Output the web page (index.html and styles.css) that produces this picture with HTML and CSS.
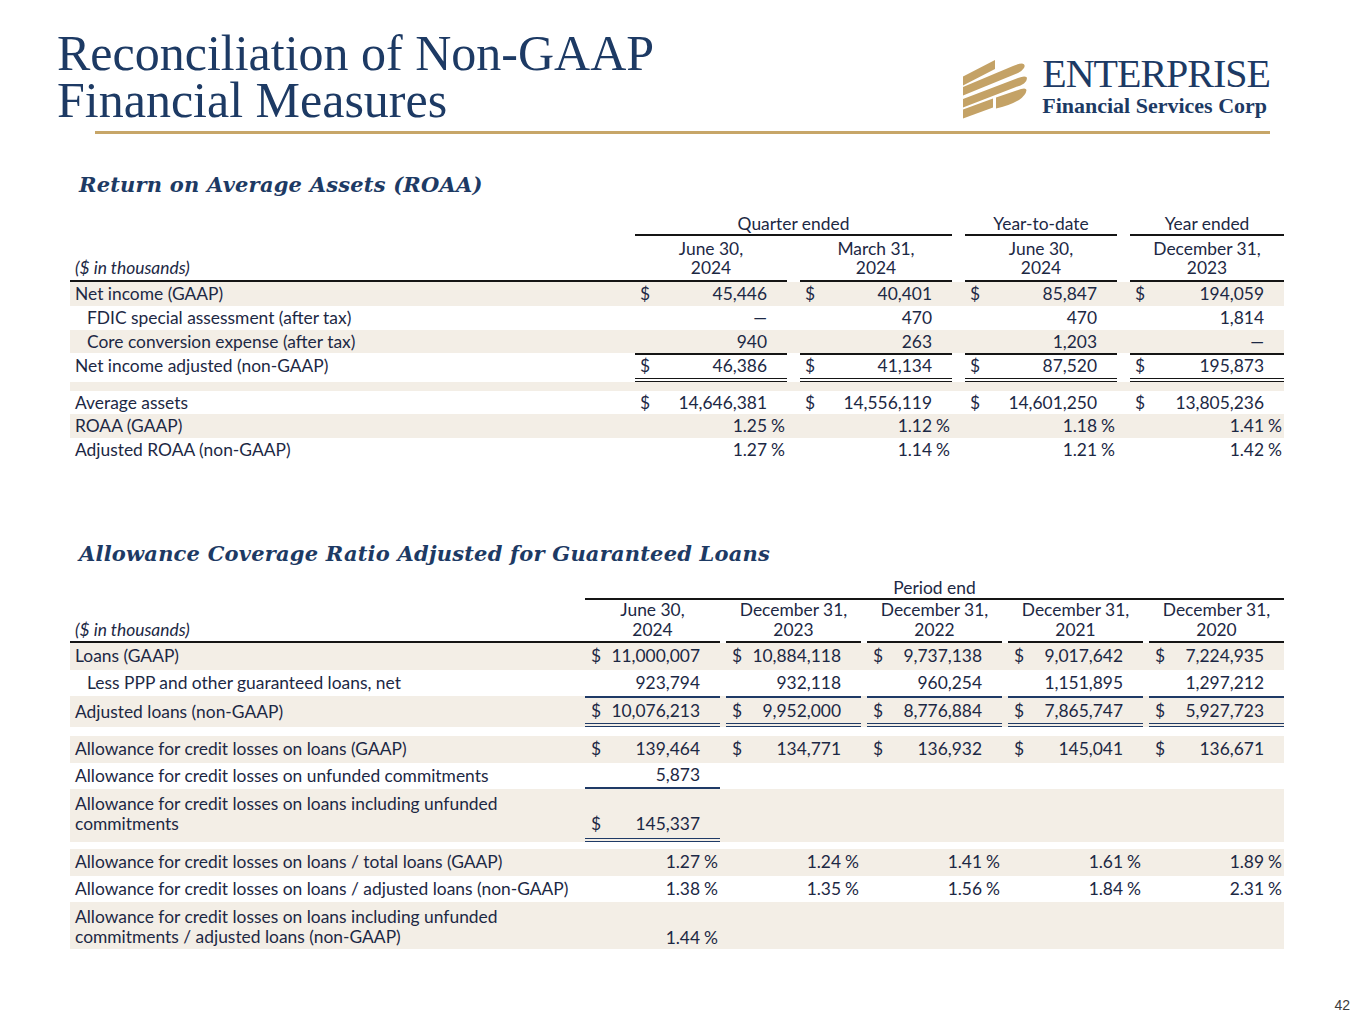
FILE: index.html
```html
<!DOCTYPE html>
<html lang="en">
<head>
<meta charset="utf-8">
<title>Reconciliation of Non-GAAP Financial Measures</title>
<link rel="stylesheet" href="styles.css">
</head>
<body>
<div class="slide">
  <header class="top">
    <h1 class="title">Reconciliation of Non-GAAP<br>Financial Measures</h1>
    <div class="logo">
      <svg class="mark" viewBox="0 0 74 64" aria-hidden="true">
        <g fill="#c4a266">
          <polygon points="2,18.5 34,2 34,11 2,27.5"/>
          <path d="M2,29 L52,8 Q58,5.5 61,5.5 Q65,6 63,10 Q61,13 57,15 L2,37.5 Z"/>
          <path d="M2,41 L57,20 Q63,17.5 65.5,19 Q67,22 63,25.5 Q60,27.5 55,29 L2,49.5 Z"/>
          <polygon points="2,51.5 32,40.5 32,49.5 2,60.5"/>
          <path d="M35,39.5 L60,31 Q65,29.5 65.5,32 Q65,37 58,42 Q48,48 35,50.5 Z"/>
        </g>
      </svg>
      <div class="logo-text">
        <div class="logo-name">ENTERPRISE</div>
        <div class="logo-sub">Financial Services Corp</div>
      </div>
    </div>
  </header>
  <div class="rule"></div>

  <section class="sec sec1">
    <h2 class="sec-title">Return on Average Assets (ROAA)</h2>
    <div class="t1">
      <div class="row grp">
        <div></div>
        <div class="gh span2">Quarter ended</div>
        <div class="gh">Year-to-date</div>
        <div class="gh">Year ended</div>
      </div>
      <div class="row hdr">
        <div class="units">($ in thousands)</div>
        <div class="dh">June 30,<br>2024</div>
        <div class="dh">March 31,<br>2024</div>
        <div class="dh">June 30,<br>2024</div>
        <div class="dh">December 31,<br>2023</div>
      </div>
      <div class="row r shade">
        <div class="lbl">Net income (GAAP)</div>
        <div class="v"><span class="cur">$</span><span class="num">45,446</span><span class="suf"></span></div>
        <div class="v"><span class="cur">$</span><span class="num">40,401</span><span class="suf"></span></div>
        <div class="v"><span class="cur">$</span><span class="num">85,847</span><span class="suf"></span></div>
        <div class="v"><span class="cur">$</span><span class="num">194,059</span><span class="suf"></span></div>
      </div>
      <div class="row r">
        <div class="lbl ind">FDIC special assessment (after tax)</div>
        <div class="v"><span class="cur"></span><span class="num">—</span><span class="suf"></span></div>
        <div class="v"><span class="cur"></span><span class="num">470</span><span class="suf"></span></div>
        <div class="v"><span class="cur"></span><span class="num">470</span><span class="suf"></span></div>
        <div class="v"><span class="cur"></span><span class="num">1,814</span><span class="suf"></span></div>
      </div>
      <div class="row r r23 shade">
        <div class="lbl ind">Core conversion expense (after tax)</div>
        <div class="v"><span class="cur"></span><span class="num">940</span><span class="suf"></span></div>
        <div class="v"><span class="cur"></span><span class="num">263</span><span class="suf"></span></div>
        <div class="v"><span class="cur"></span><span class="num">1,203</span><span class="suf"></span></div>
        <div class="v"><span class="cur"></span><span class="num">—</span><span class="suf"></span></div>
      </div>
      <div class="row r tot">
        <div class="lbl">Net income adjusted (non-GAAP)</div>
        <div class="v sum"><span class="cur">$</span><span class="num">46,386</span><span class="suf"></span></div>
        <div class="v sum"><span class="cur">$</span><span class="num">41,134</span><span class="suf"></span></div>
        <div class="v sum"><span class="cur">$</span><span class="num">87,520</span><span class="suf"></span></div>
        <div class="v sum"><span class="cur">$</span><span class="num">195,873</span><span class="suf"></span></div>
      </div>
      <div class="gap1 shade"></div>
      <div class="row r r23">
        <div class="lbl">Average assets</div>
        <div class="v"><span class="cur">$</span><span class="num">14,646,381</span><span class="suf"></span></div>
        <div class="v"><span class="cur">$</span><span class="num">14,556,119</span><span class="suf"></span></div>
        <div class="v"><span class="cur">$</span><span class="num">14,601,250</span><span class="suf"></span></div>
        <div class="v"><span class="cur">$</span><span class="num">13,805,236</span><span class="suf"></span></div>
      </div>
      <div class="row r shade">
        <div class="lbl">ROAA (GAAP)</div>
        <div class="v"><span class="cur"></span><span class="num">1.25</span><span class="suf">%</span></div>
        <div class="v"><span class="cur"></span><span class="num">1.12</span><span class="suf">%</span></div>
        <div class="v"><span class="cur"></span><span class="num">1.18</span><span class="suf">%</span></div>
        <div class="v"><span class="cur"></span><span class="num">1.41</span><span class="suf">%</span></div>
      </div>
      <div class="row r">
        <div class="lbl">Adjusted ROAA (non-GAAP)</div>
        <div class="v"><span class="cur"></span><span class="num">1.27</span><span class="suf">%</span></div>
        <div class="v"><span class="cur"></span><span class="num">1.14</span><span class="suf">%</span></div>
        <div class="v"><span class="cur"></span><span class="num">1.21</span><span class="suf">%</span></div>
        <div class="v"><span class="cur"></span><span class="num">1.42</span><span class="suf">%</span></div>
      </div>
    </div>
  </section>

  <section class="sec sec2">
    <h2 class="sec-title">Allowance Coverage Ratio Adjusted for Guaranteed Loans</h2>
    <div class="t2">
      <div class="row grp">
        <div></div>
        <div class="gh span5">Period end</div>
      </div>
      <div class="row hdr">
        <div class="units">($ in thousands)</div>
        <div class="dh">June 30,<br>2024</div>
        <div class="dh">December 31,<br>2023</div>
        <div class="dh">December 31,<br>2022</div>
        <div class="dh">December 31,<br>2021</div>
        <div class="dh">December 31,<br>2020</div>
      </div>
      <div class="row r shade">
        <div class="lbl">Loans (GAAP)</div>
        <div class="v"><span class="cur">$</span><span class="num">11,000,007</span><span class="suf"></span></div>
        <div class="v"><span class="cur">$</span><span class="num">10,884,118</span><span class="suf"></span></div>
        <div class="v"><span class="cur">$</span><span class="num">9,737,138</span><span class="suf"></span></div>
        <div class="v"><span class="cur">$</span><span class="num">9,017,642</span><span class="suf"></span></div>
        <div class="v"><span class="cur">$</span><span class="num">7,224,935</span><span class="suf"></span></div>
      </div>
      <div class="row r">
        <div class="lbl ind">Less PPP and other guaranteed loans, net</div>
        <div class="v"><span class="cur"></span><span class="num">923,794</span><span class="suf"></span></div>
        <div class="v"><span class="cur"></span><span class="num">932,118</span><span class="suf"></span></div>
        <div class="v"><span class="cur"></span><span class="num">960,254</span><span class="suf"></span></div>
        <div class="v"><span class="cur"></span><span class="num">1,151,895</span><span class="suf"></span></div>
        <div class="v"><span class="cur"></span><span class="num">1,297,212</span><span class="suf"></span></div>
      </div>
      <div class="row r tot shade">
        <div class="lbl">Adjusted loans (non-GAAP)</div>
        <div class="v sum"><span class="cur">$</span><span class="num">10,076,213</span><span class="suf"></span></div>
        <div class="v sum"><span class="cur">$</span><span class="num">9,952,000</span><span class="suf"></span></div>
        <div class="v sum"><span class="cur">$</span><span class="num">8,776,884</span><span class="suf"></span></div>
        <div class="v sum"><span class="cur">$</span><span class="num">7,865,747</span><span class="suf"></span></div>
        <div class="v sum"><span class="cur">$</span><span class="num">5,927,723</span><span class="suf"></span></div>
      </div>
      <div class="gap2"></div>
      <div class="row r shade">
        <div class="lbl">Allowance for credit losses on loans (GAAP)</div>
        <div class="v"><span class="cur">$</span><span class="num">139,464</span><span class="suf"></span></div>
        <div class="v"><span class="cur">$</span><span class="num">134,771</span><span class="suf"></span></div>
        <div class="v"><span class="cur">$</span><span class="num">136,932</span><span class="suf"></span></div>
        <div class="v"><span class="cur">$</span><span class="num">145,041</span><span class="suf"></span></div>
        <div class="v"><span class="cur">$</span><span class="num">136,671</span><span class="suf"></span></div>
      </div>
      <div class="row r">
        <div class="lbl">Allowance for credit losses on unfunded commitments</div>
        <div class="v under"><span class="cur"></span><span class="num">5,873</span><span class="suf"></span></div>
      </div>
      <div class="row r two shade">
        <div class="lbl">Allowance for credit losses on loans including unfunded<br>commitments</div>
        <div class="v end dbl"><span class="cur">$</span><span class="num">145,337</span><span class="suf"></span></div>
      </div>
      <div class="gap3"></div>
      <div class="row r shade">
        <div class="lbl">Allowance for credit losses on loans / total loans (GAAP)</div>
        <div class="v"><span class="cur"></span><span class="num">1.27</span><span class="suf">%</span></div>
        <div class="v"><span class="cur"></span><span class="num">1.24</span><span class="suf">%</span></div>
        <div class="v"><span class="cur"></span><span class="num">1.41</span><span class="suf">%</span></div>
        <div class="v"><span class="cur"></span><span class="num">1.61</span><span class="suf">%</span></div>
        <div class="v"><span class="cur"></span><span class="num">1.89</span><span class="suf">%</span></div>
      </div>
      <div class="row r">
        <div class="lbl">Allowance for credit losses on loans / adjusted loans (non-GAAP)</div>
        <div class="v"><span class="cur"></span><span class="num">1.38</span><span class="suf">%</span></div>
        <div class="v"><span class="cur"></span><span class="num">1.35</span><span class="suf">%</span></div>
        <div class="v"><span class="cur"></span><span class="num">1.56</span><span class="suf">%</span></div>
        <div class="v"><span class="cur"></span><span class="num">1.84</span><span class="suf">%</span></div>
        <div class="v"><span class="cur"></span><span class="num">2.31</span><span class="suf">%</span></div>
      </div>
      <div class="row r two last shade">
        <div class="lbl">Allowance for credit losses on loans including unfunded<br>commitments / adjusted loans (non-GAAP)</div>
        <div class="v end"><span class="cur"></span><span class="num">1.44</span><span class="suf">%</span></div>
      </div>
    </div>
  </section>

  <footer class="pg">42</footer>
</div>
</body>
</html>
```

FILE: styles.css
```css
* { box-sizing: border-box; margin: 0; padding: 0; }

body {
  width: 1365px;
  height: 1024px;
  background: #ffffff;
  font-family: Lato, "Open Sans", sans-serif;
  color: #1c2844;
  overflow: hidden;
}

.slide { width: 1365px; height: 1024px; }

/* ---------- header ---------- */
.top {
  display: flex;
  justify-content: space-between;
  height: 131px;
}

.title {
  font-family: "Liberation Serif", serif;
  font-weight: 400;
  font-size: 50px;
  line-height: 47px;
  color: #1d3a64;
  padding: 30px 0 0 57px;
}

.logo {
  display: flex;
  gap: 7px;
  padding-top: 57px;
  margin-right: 95px;
}

.mark { width: 74px; height: 64px; margin-top: 1px; }

.logo-text { font-family: "Liberation Serif", serif; color: #1d3a64; }

.logo-name {
  font-size: 40px;
  line-height: 32px;
  letter-spacing: -1px;
  margin-top: 1px;
}

.logo-sub {
  font-size: 22px;
  line-height: 24px;
  font-weight: 700;
  margin-top: 4px;
}

.rule {
  height: 3px;
  width: 1175px;
  margin-left: 95px;
  background: #c7a668;
}

/* ---------- sections ---------- */
.sec { padding-left: 70px; width: 1284px; }

.sec-title {
  font-family: "DejaVu Serif", serif;
  font-style: italic;
  font-weight: 700;
  font-size: 21px;
  letter-spacing: 0.2px;
  line-height: 26px;
  color: #1d3a64;
  padding-left: 9px;
}

.sec1 .sec-title { margin-top: 38px; margin-bottom: 15px; }
.sec2 { margin-top: 79px; }
.sec2 .sec-title { margin-bottom: 10px; }

.row { display: grid; font-size: 17.4px; }

.t1 .row { grid-template-columns: 552px 152px 152px 152px 154px; column-gap: 13px; }
.t2 .row { grid-template-columns: 509px repeat(5, 135px); column-gap: 6px; }

.shade { background: #f3eee6; }

/* group header */
.gh {
  text-align: center;
  line-height: 21px;
  border-bottom: 2px solid #151515;
}
.span2 { grid-column: span 2; }
.span5 { grid-column: span 5; }

/* date header */
.t1 .dh { line-height: 19px; padding: 3px 0; }
.t2 .dh { line-height: 20px; padding: 0 0 1px; }
.dh {
  text-align: center;
  border-bottom: 2px solid #151515;
}

.units {
  font-style: italic;
  display: flex;
  align-items: flex-end;
  padding: 0 0 3px 5px;
  line-height: 19px;
  border-bottom: 2px solid #151515;
}
.t1 .units { margin-right: -13px; }
.t2 .units { margin-right: -6px; padding-bottom: 2px; }

/* body rows */
.t1 .r { height: 24px; }
.t1 .r23 { height: 23px; }
.t1 .tot { height: 29px; }
.t2 .r { height: 26.5px; }
.t2 .tot { height: 31px; }
.t2 .two { height: 53px; }
.t2 .two.last { height: 47px; }

.lbl {
  display: flex;
  align-items: center;
  padding-left: 5px;
  white-space: nowrap;
  line-height: 20px;
}
.ind { padding-left: 17px; }
.t1 .tot .lbl { padding-bottom: 4px; }
.t1 .tot .v { padding-bottom: 1px; }
.two .lbl { align-items: flex-start; padding-top: 5px; }

.v {
  display: flex;
  align-items: center;
  white-space: nowrap;
  line-height: 20px;
}
.v.end { align-items: flex-end; padding-bottom: 4px; }
.two.last .v.end { padding-bottom: 1px; }

.cur { width: 22px; padding-left: 5px; }
.t2 .cur { padding-left: 6px; }
.num { flex: 1; text-align: right; }
.suf { width: 20px; padding-left: 4px; }

.t1 .sum { border-top: 2px solid #151515; border-bottom: 4px double #151515; }
.t2 .sum { border-top: 2px solid #1f3a66; border-bottom: 4px double #1f3a66; }
.t2 .under { border-bottom: 2px solid #1f3a66; }
.t2 .dbl { border-bottom: 4px double #1f3a66; }

.gap1 { height: 9px; }
.gap2 { height: 9px; }
.gap3 { height: 7px; }

/* page number */
.pg {
  margin-top: 48px;
  padding-right: 15px;
  text-align: right;
  font-family: "Liberation Sans", Arial, sans-serif;
  font-size: 14px;
  line-height: 16px;
  color: #3d3d3d;
}
```
